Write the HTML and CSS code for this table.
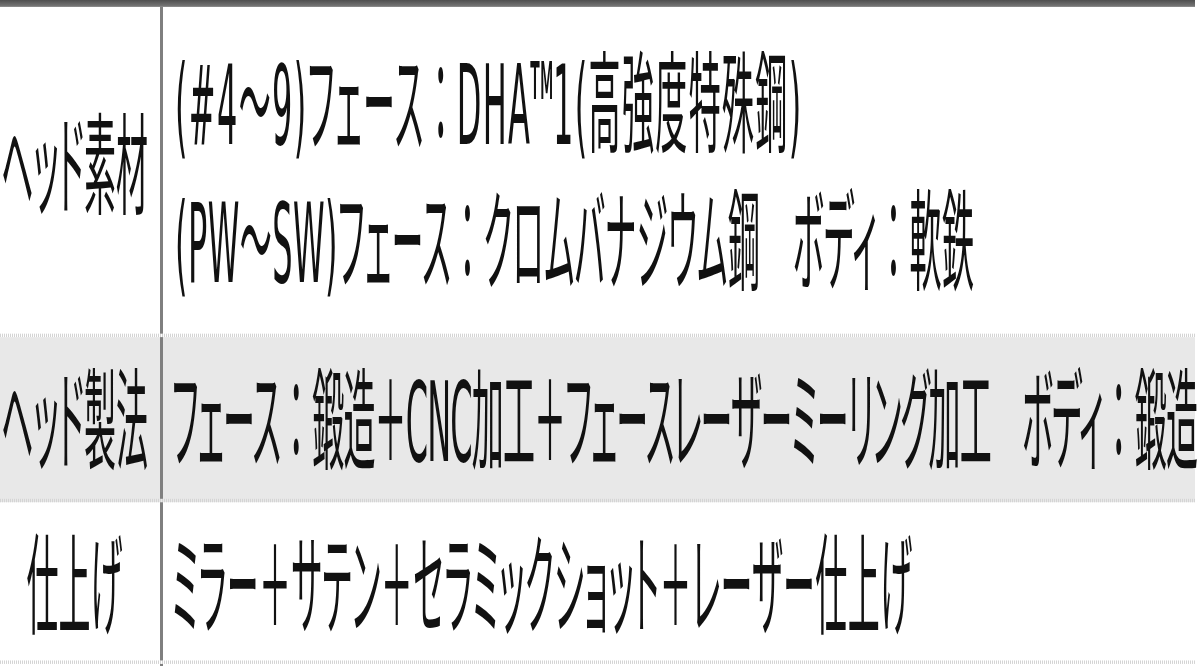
FILE: index.html
```html
<!DOCTYPE html>
<html lang="ja">
<head>
<meta charset="utf-8">
<title>スペック</title>
<link rel="stylesheet" href="styles.css">
</head>
<body>
<div class="sheet">
  <div class="topbar"></div>
  <div class="row r1">
    <div class="label">ヘッド素材</div>
    <div class="value">
      <div class="line l1">(#4～9)フェース<span class="colon">：</span>DHA<span class="tm">™</span>1(高強度特殊鋼)</div>
      <div class="line l2">(PW～SW)フェース<span class="colon">：</span>クロムバナジウム鋼　ボディ<span class="colon">：</span>軟鉄</div>
    </div>
  </div>
  <div class="row r2 shaded">
    <div class="label">ヘッド製法</div>
    <div class="value">
      <div class="line l3">フェース<span class="colon">：</span>鍛造＋CNC加工＋フェースレーザーミーリング加工　ボディ<span class="colon">：</span>鍛造</div>
    </div>
  </div>
  <div class="row r3">
    <div class="label">仕上げ</div>
    <div class="value">
      <div class="line l4">ミラー＋サテン＋セラミックショット＋レーザー仕上げ</div>
    </div>
  </div>
  <div class="tail"></div>
</div>
</body>
</html>
```

FILE: styles.css
```css
html, body {
  margin: 0;
  padding: 0;
  height: 666px;
  background: #ffffff;
  overflow: hidden;
}

.sheet {
  width: 1195px;
  transform: scaleY(3.44);
  transform-origin: 0 0;
  font-family: "DejaVu Sans", "Noto Sans CJK JP", sans-serif;
  font-feature-settings: "palt";
  font-size: 32px;
  line-height: 40px;
  color: #111111;
}

.topbar {
  height: 1.6px;
  background: linear-gradient(#4e4e4e, #7a7a7a);
}

.row {
  display: flex;
  box-sizing: border-box;
  border-bottom: 1px dotted #d4d4d4;
}

.r1 { height: 96px; }
.r2 { height: 48.3px; }
.r3 { height: 47.1px; }

.shaded { background: #e8e8e8; }

.label {
  flex: 0 0 163px;
  box-sizing: border-box;
  padding-right: 11px;
  border-right: 3px solid #7f7f7f;
  display: flex;
  align-items: center;
  justify-content: center;
  white-space: nowrap;
}

.value {
  flex: 1;
  box-sizing: border-box;
  padding-left: 9px;
  display: flex;
  flex-direction: column;
  justify-content: center;
}

.r1 .value { padding-left: 12px; padding-top: 1.8px; }
.r2 .label, .r2 .value { padding-top: 4px; }
.r3 .label, .r3 .value { padding-top: 5px; }

.line { white-space: nowrap; }
.l1 { letter-spacing: 1.35px; }
.l2 { letter-spacing: 0.45px; }
.l3 { letter-spacing: -0.85px; }
.l4 { letter-spacing: 0.5px; }

.colon {
  font-feature-settings: normal;
  letter-spacing: 0;
}

.tm {
  font-family: "Noto Sans CJK JP", sans-serif;
  letter-spacing: 0;
  margin-left: -1px;
}

.tail {
  width: 163px;
  height: 2px;
  box-sizing: border-box;
  border-right: 3px solid #7f7f7f;
}
```
